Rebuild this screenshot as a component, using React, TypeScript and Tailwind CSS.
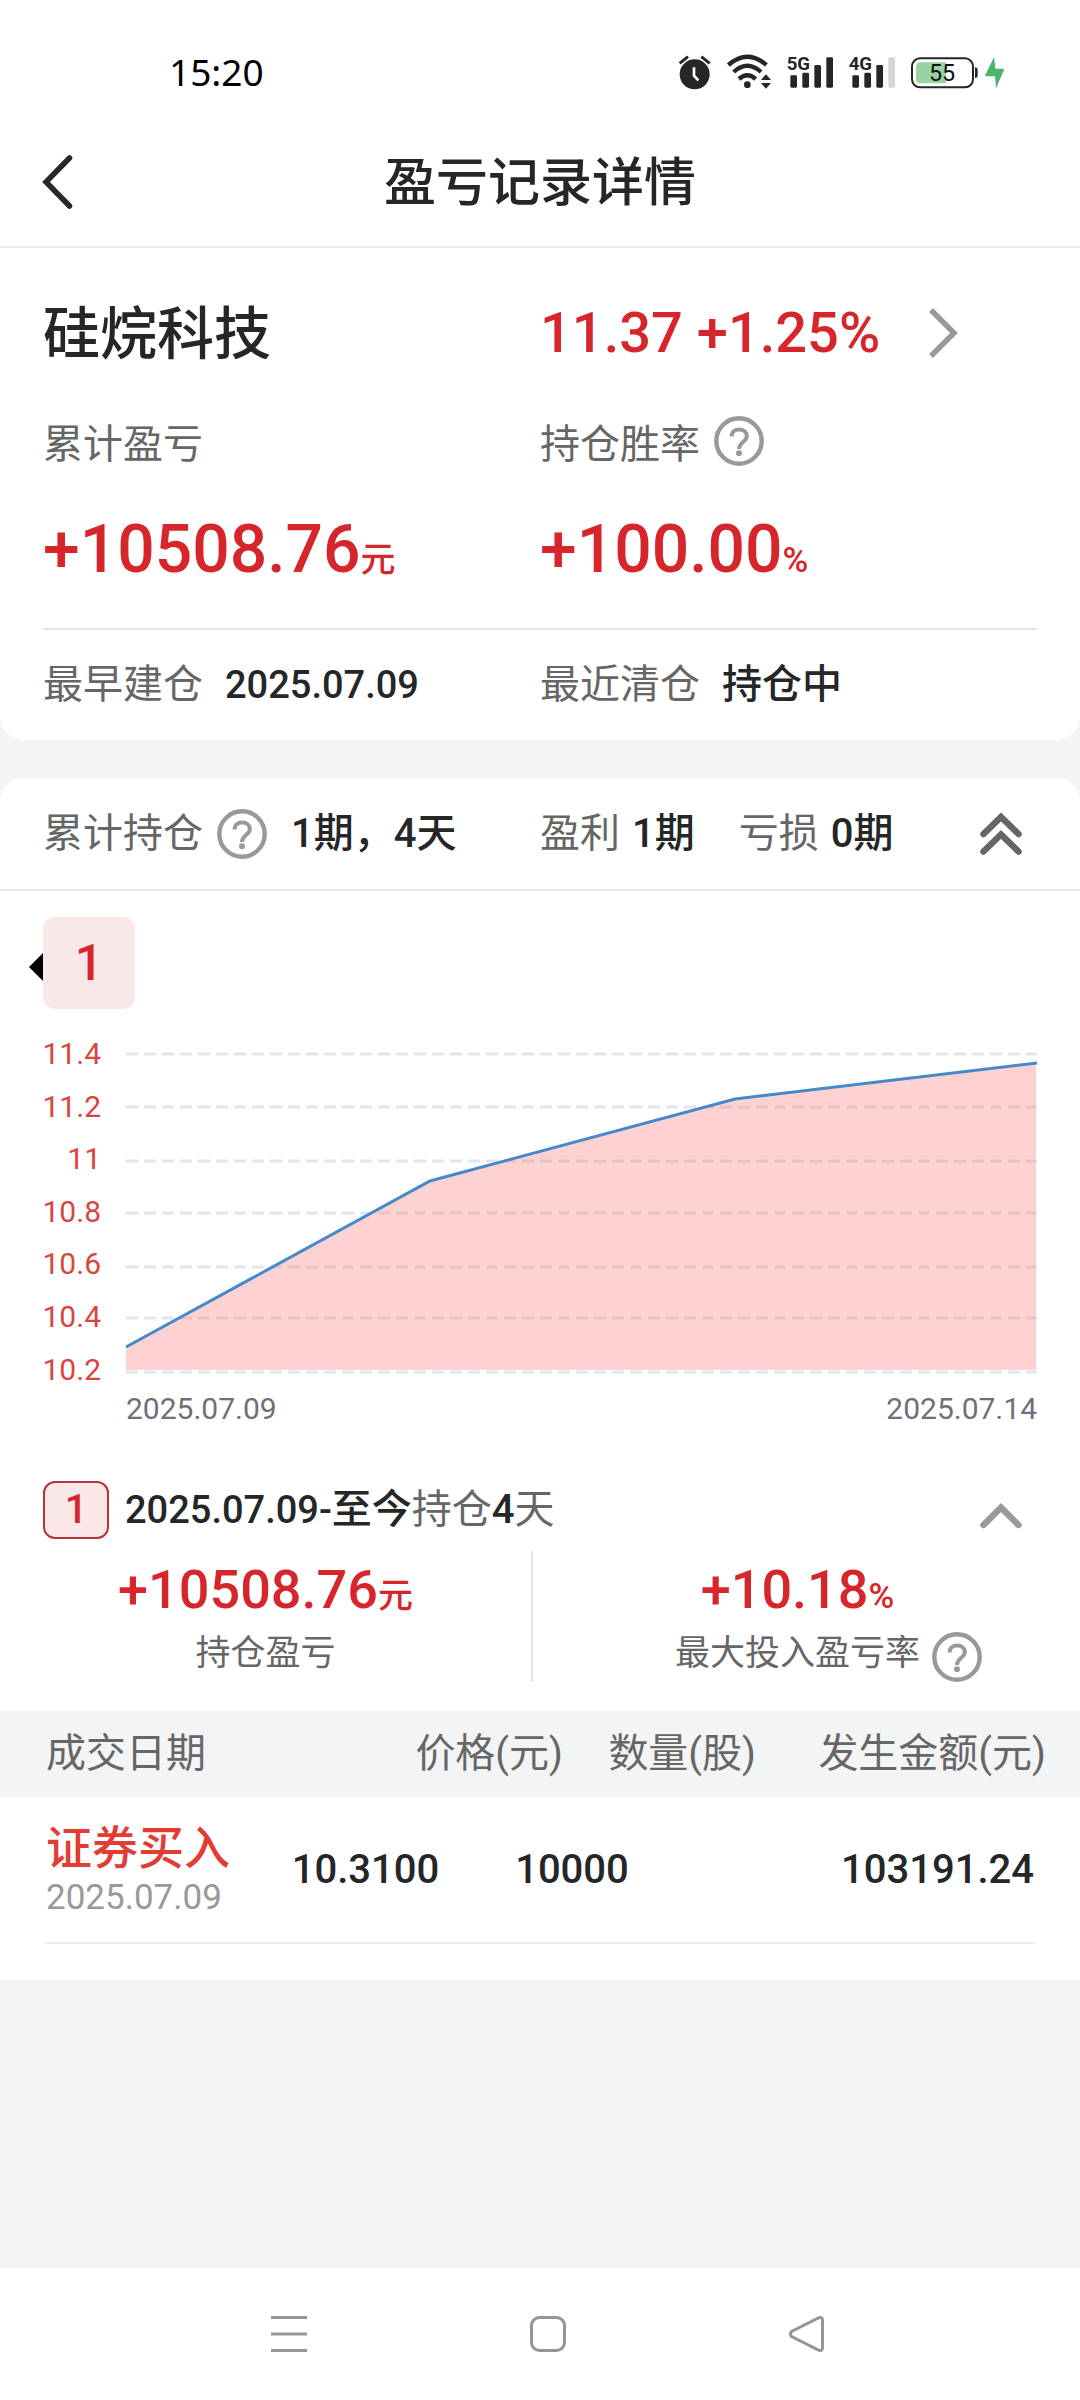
import React, { useState } from "react";

const RED = "text-[#d6262b]";

function HelpIcon() {
  return (
    <svg width="50" height="50" viewBox="0 0 50 50" fill="none" stroke="#999" aria-hidden="true">
      <circle cx="25" cy="25" r="22.7" strokeWidth="4.4" />
      <path d="M17.6 20.6C17.6 16 21 13.6 25.2 13.6S32.8 16.2 32.8 20.2C32.8 26 25 25.6 25 33" strokeWidth="4" />
      <circle cx="25" cy="37.2" r="3" fill="#999" stroke="none" />
    </svg>
  );
}

function HelpButton({ label }: { label: string }) {
  return (
    <button type="button" aria-label={label} className="h-[50px] w-[50px] shrink-0">
      <HelpIcon />
    </button>
  );
}

function Unit({ children }: { children: string }) {
  return <span className="text-[35px] leading-none">{children}</span>;
}

function Signal({ label, dim }: { label: string; dim?: boolean }) {
  return (
    <svg width="48" height="40" viewBox="0 0 144 120" fill="#262626">
      <text x="2" y="55" fontSize="56" fontWeight="700" fontFamily="Roboto, sans-serif">
        {label}
      </text>
      <rect x="13" y="70" width="20" height="37" rx="4" />
      <rect x="49" y="62" width="20" height="45" rx="4" />
      <rect x="85" y="39" width="20" height="68" rx="4" />
      <rect x="121" y="16" width="20" height="91" rx="4" fill={dim ? "#d6d6d6" : "#262626"} />
    </svg>
  );
}

function StatusBar() {
  return (
    <div className="flex h-[118px] items-center justify-between pt-[26px] pr-[75px] pl-[169px]">
      <time className="font-['Noto_Sans'] text-[37px] leading-[44px] text-black">15:20</time>
      <div className="flex items-center gap-[14px]">
        <svg width="34" height="40" viewBox="118 65 102 120" fill="none" stroke="#262626">
          <circle cx="168" cy="132" r="45" fill="#262626" stroke="none" />
          <path d="M123 99l25-20M213 99l-25-20" strokeWidth="9" />
          <path d="M166 111v25l13 14" stroke="#fff" strokeWidth="8" />
        </svg>
        <svg width="46" height="40" viewBox="261 65 138 120" fill="none" stroke="#262626" strokeWidth="13">
          <path d="M268 104Q325 54 382 104" />
          <path d="M284 125Q325 88 366 125" />
          <path d="M300 146Q325 124 350 146" />
          <circle cx="325" cy="163" r="10" fill="#262626" stroke="none" />
          <path d="M366 149l15-17 15 17zM366 158l15 17 15-17z" fill="#262626" stroke="none" />
        </svg>
        <Signal label="5G" />
        <Signal label="4G" dim />
        <div className="flex gap-[5px]">
          <svg width="69" height="40" viewBox="810 65 207 120">
            <path d="M842 96h76v63h-76q-14 0-14-14v-35q0-14 14-14z" fill="#98d3a4" />
            <rect x="816" y="84" width="183" height="87" rx="24" fill="none" stroke="#262626" strokeWidth="6" />
            <path d="M1005 111q8 0 8 8v16q0 8-8 8z" fill="#262626" />
            <text x="906" y="153" textAnchor="middle" fontSize="70" fontFamily="Roboto, sans-serif" fill="#111">55</text>
          </svg>
          <svg width="21" height="40" viewBox="1033 65 63 120" fill="#4db56a">
            <path d="M1063 80l-26 54q-1 4 3 4h26l3 36 24-55q1-4-3-4h-23z" />
          </svg>
        </div>
      </div>
    </div>
  );
}

const axis = [
  { label: "11.4", y: 45, grid: 45 },
  { label: "11.2", y: 98, grid: 98 },
  { label: "11", y: 150, grid: 152 },
  { label: "10.8", y: 203, grid: 204 },
  { label: "10.6", y: 255, grid: 258 },
  { label: "10.4", y: 308, grid: 309 },
  { label: "10.2", y: 361, grid: 363 },
];

function Chart() {
  return (
    <svg viewBox="0 0 1080 432" className="block w-full" fontFamily="Roboto, sans-serif" fontSize="30" role="img" aria-label="持仓价格走势">
      {axis.map((a) => (
        <g key={a.label}>
          <text x="101" y={a.y + 10} textAnchor="end" fill="#d9453c">{a.label}</text>
          <line x1="126" x2="1037" y1={a.grid} y2={a.grid} stroke="#e0e5ee" strokeWidth="3" strokeDasharray="12 6" />
        </g>
      ))}
      <path d="M126 338L430 172L735 90L1036 54V361H126z" fill="#ff6b6b" fillOpacity="0.3" />
      <path d="M126 338L430 172L735 90L1037 54" fill="none" stroke="#4389cb" strokeWidth="3" />
      <text x="126" y="410" fill="#6e7079">2025.07.09</text>
      <text x="1037" y="410" textAnchor="end" fill="#6e7079">2025.07.14</text>
    </svg>
  );
}

export default function App() {
  const [open, setOpen] = useState(true);
  const [detail, setDetail] = useState(true);
  return (
    <div className="flex min-h-screen flex-col bg-[#f3f4f6] font-['Roboto','Noto_Sans_CJK_SC',sans-serif] text-[#242628]">
      <div className="bg-white">
        <StatusBar />
        <header className="relative flex h-[130px] items-center justify-center border-b-2 border-[#ebebeb]">
          <button type="button" aria-label="返回" className="absolute left-10">
            <svg width="36" height="56" viewBox="0 0 36 56" fill="none" stroke="#262829" strokeWidth="5.5" strokeLinecap="round">
              <path d="M29.5 4L6 28l23.5 24" />
            </svg>
          </button>
          <h1 className="pt-1 text-[52px] leading-[64px] font-medium">盈亏记录详情</h1>
        </header>
      </div>

      <section className="rounded-b-3xl bg-white px-[43px] pt-12">
        <div className="grid h-[70px] grid-cols-2 items-center">
          <h2 className="pt-1 text-[57px] leading-[70px] font-medium">硅烷科技</h2>
          <a href="#quote" className={`flex items-center gap-12 text-[56px] leading-[70px] font-medium ${RED}`}>
            <span>11.37 +1.25%</span>
            <svg width="32" height="52" viewBox="0 0 32 52" fill="none" stroke="#999" strokeWidth="5.5" aria-hidden="true">
              <path d="M3 3l23 23L3 49" />
            </svg>
          </a>
        </div>
        <dl className="mt-[46px] grid grid-cols-2">
          <div>
            <dt className="flex h-[60px] text-[40px] leading-[66px] text-[#666]">累计盈亏</dt>
            <dd className={`mt-10 text-[66px] leading-[76px] font-medium ${RED}`}>
              +10508.76<Unit>元</Unit>
            </dd>
          </div>
          <div>
            <dt className="flex h-[60px] gap-[14px] text-[40px] leading-[66px] text-[#666]">
              持仓胜率
              <span className="pt-1 leading-none"><HelpButton label="持仓胜率说明" /></span>
            </dt>
            <dd className={`mt-10 text-[66px] leading-[76px] font-medium ${RED}`}>
              +100.00<Unit>%</Unit>
            </dd>
          </div>
        </dl>
        <dl className="mt-10 grid h-[112px] grid-cols-2 items-center border-t-2 border-[#e5e5e5] text-[40px] leading-[60px]">
          <div className="flex items-center gap-[22px]">
            <dt className="text-[#666]">最早建仓</dt>
            <dd className="text-[38px] font-medium">2025.07.09</dd>
          </div>
          <div className="flex items-center gap-[22px]">
            <dt className="text-[#666]">最近清仓</dt>
            <dd className="font-medium">持仓中</dd>
          </div>
        </dl>
      </section>

      <section className="mt-[38px] rounded-t-3xl bg-white pb-9">
        <div className="flex h-[113px] items-center border-b-2 border-[#e5e5e5] pr-[58px] pl-[43px] text-[40px] leading-[60px]">
          <div className="flex w-[497px] items-center">
            <span className="text-[#666]">累计持仓</span>
            <span className="ml-[14px] flex"><HelpButton label="累计持仓说明" /></span>
            <span className="ml-6 font-medium">1期，4天</span>
          </div>
          <span className="text-[#666]">盈利</span>
          <span className="ml-3 font-medium">1期</span>
          <span className="ml-11 text-[#666]">亏损</span>
          <span className="ml-3 font-medium">0期</span>
          <button type="button" aria-label="收起" aria-expanded={open} onClick={() => setOpen(!open)} className="ml-auto">
            <svg width="42" height="44" viewBox="1 0 42 44" fill="none" stroke="#666" strokeWidth="6.5" strokeLinecap="round">
              <path d="M4.5 22L22 5l17.500 17M4.500 39.500L22 22.500l17.500 17" />
            </svg>
          </button>
        </div>

        {open && (
          <>
            <div className="mt-[26px] pl-[43px]">
              <button type="button" className={`relative block h-[92px] w-[92px] rounded-xl bg-[#fae8e9] text-[50px] leading-[92px] font-medium ${RED}`}>
                1
                <svg width="14" height="28" viewBox="0 0 14 28" className="absolute top-9 right-full" aria-hidden="true">
                  <path d="M14 0v28L0 14z" />
                </svg>
              </button>
            </div>
            <Chart />
          </>
        )}

        <div className="mt-10 flex h-[58px] items-center pr-[58px] pl-[43px]">
          <span className={`w-[66px] rounded-xl border-2 border-[#b5343a] bg-[#fae8e9] text-center text-[40px] leading-[54px] font-medium ${RED}`}>1</span>
          <p className="ml-4 text-[40px] leading-[58px] font-medium">
            <span className="text-[38px] leading-none">2025.07.09-</span>至今<span className="font-normal text-[#666]">持仓</span>4<span className="font-normal text-[#666]">天</span>
          </p>
          <button type="button" aria-label="收起明细" aria-expanded={detail} onClick={() => setDetail(!detail)} className="ml-auto pt-3">
            <svg width="42" height="28" viewBox="1 0 42 28" fill="none" stroke="#999" strokeWidth="6.5" strokeLinecap="round">
              <path d="M4.500 23L22 5.500l17.500 17.500" />
            </svg>
          </button>
        </div>

        {detail && (
          <>
            <div className="mt-3 grid grid-cols-2 pr-[18px] text-center">
              <div className="pt-[7px]">
                <p className={`text-[54px] leading-[64px] font-medium ${RED}`}>
                  +10508.76<Unit>元</Unit>
                </p>
                <p className="mt-[10px] text-[35px] leading-[44px] text-[#666]">持仓盈亏</p>
              </div>
              <div className="border-l-2 border-[#e5e5e5] pt-[7px]">
                <p className={`text-[54px] leading-[64px] font-medium ${RED}`}>
                  +10.18<Unit>%</Unit>
                </p>
                <div className="mt-[10px] flex justify-center gap-3 pl-[62px] text-[35px] leading-[44px] text-[#666]">
                  最大投入盈亏率
                  <HelpButton label="最大投入盈亏率说明" />
                </div>
              </div>
            </div>

            <table className="mt-[29px] block w-full">
              <thead className="block bg-[#f3f4f6] pr-[34px] pl-[46px]">
                <tr className="grid h-[86px] grid-cols-[260fr_257fr_193fr_290fr] items-center text-right text-[40px] leading-[60px] text-[#666]">
                  <th className="text-left font-normal">成交日期</th>
                  <th className="font-normal">价格(元)</th>
                  <th className="font-normal">数量(股)</th>
                  <th className="font-normal">发生金额(元)</th>
                </tr>
              </thead>
              <tbody className="block px-[46px]">
                <tr className="grid h-[147px] grid-cols-[246fr_148fr_190fr_406fr] items-center border-b-2 border-[#ededed] text-right text-[40px] leading-[60px] font-medium">
                  <td className="text-left">
                    <div className="text-[46px] leading-[56px] text-[#e23c33]">证券买入</div>
                    <div className="text-[35px] leading-[44px] font-normal text-[#999]">2025.07.09</div>
                  </td>
                  <td>10.3100</td>
                  <td>10000</td>
                  <td>103191.24</td>
                </tr>
              </tbody>
            </table>
          </>
        )}
      </section>

      <nav className="mt-auto grid h-[132px] grid-cols-3 items-center justify-items-center bg-white pr-36 pl-40">
        <button type="button" aria-label="最近任务">
          <svg width="36" height="36" viewBox="0 0 36 36" stroke="#959595" strokeWidth="3">
            <path d="M0 1.500h36M0 18h36M0 34.500h36" />
          </svg>
        </button>
        <button type="button" aria-label="主屏幕">
          <svg width="36" height="36" viewBox="0 0 36 36" fill="none" stroke="#959595" strokeWidth="3">
            <rect x="1.500" y="1.500" width="33" height="33" rx="8" />
          </svg>
        </button>
        <button type="button" aria-label="返回上一级">
          <svg width="36" height="36" viewBox="0 0 36 36" fill="none" stroke="#959595" strokeWidth="3" strokeLinejoin="round">
            <path d="M2.500 15.500L29.500 1.900q4-1.500 4 2.500v27.200q0 4-4 2.500L2.500 20.500q-2-2.500 0-5z" />
          </svg>
        </button>
      </nav>
    </div>
  );
}
